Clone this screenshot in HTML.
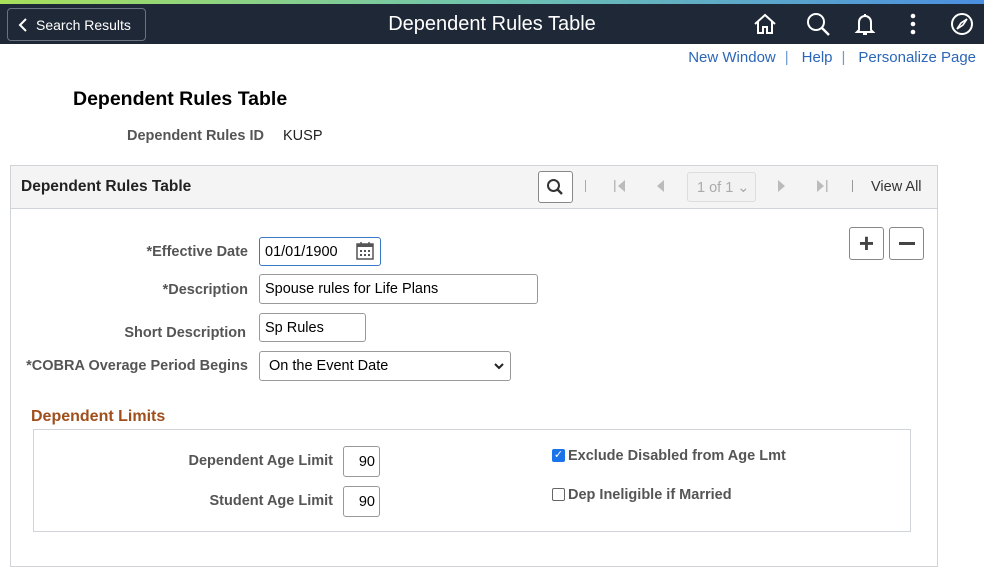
<!DOCTYPE html>
<html><head><style>
*{box-sizing:border-box;margin:0;padding:0}
body{width:984px;height:575px;position:relative;background:#fff;font-family:"Liberation Sans",Arial,sans-serif;overflow:hidden}
.a{position:absolute}
.lbl{position:absolute;font-weight:bold;font-size:14.5px;color:#555;text-align:right;white-space:nowrap}
.inp{position:absolute;border:1px solid #999;border-radius:3px;background:#fff;font-size:14.5px;color:#000;padding-left:5px;display:flex;align-items:center}
.lnk{color:#2c66b8;font-size:15px}
</style></head><body>
<div class="a" style="left:0;top:0;width:984px;height:4px;background:linear-gradient(90deg,#a8e05a,#6fc3b0 50%,#4a8fe0)"></div>
<div class="a" style="left:0;top:4px;width:984px;height:40px;background:#1f2836"></div>
<div class="a" style="left:7px;top:8px;width:139px;height:33px;border:1px solid #6b7280;border-radius:4px;color:#fff;font-size:14px;display:flex;align-items:center;padding-left:10px">
<svg width="10" height="16" viewBox="0 0 10 16"><path d="M8 2 L2 8 L8 14" stroke="#fff" stroke-width="2" fill="none"/></svg><span style="margin-left:8px">Search Results</span></div>
<div class="a" style="left:0;width:984px;top:13px;text-align:center;color:#fff;font-size:20px">Dependent Rules Table</div>
<svg class="a" style="left:752px;top:12px" width="26" height="24" viewBox="0 0 26 24"><path d="M3 12 L13 3 L23 12 M6 10 V21 H11 V15 H15 V21 H20 V10" stroke="#fff" stroke-width="2" fill="none"/></svg>
<svg class="a" style="left:805px;top:11px" width="26" height="26" viewBox="0 0 26 26"><circle cx="11" cy="11" r="8" stroke="#fff" stroke-width="2" fill="none"/><path d="M17 17 L24 24" stroke="#fff" stroke-width="2.4"/></svg>
<svg class="a" style="left:853px;top:11px" width="24" height="26" viewBox="0 0 24 26"><path d="M6 19 V11 A6 6 0 0 1 18 11 V19 L20 21 H4 Z M12 3 V5 M10 23 H14" stroke="#fff" stroke-width="2" fill="none"/></svg>
<svg class="a" style="left:908px;top:12px" width="10" height="24" viewBox="0 0 10 24"><circle cx="5" cy="4" r="2.3" fill="#fff"/><circle cx="5" cy="12" r="2.3" fill="#fff"/><circle cx="5" cy="20" r="2.3" fill="#fff"/></svg>
<svg class="a" style="left:950px;top:12px" width="24" height="24" viewBox="0 0 24 24"><circle cx="12" cy="12" r="10" stroke="#fff" stroke-width="2" fill="none"/><path d="M17 7 L11 11 L7 17 L13 13 Z" stroke="#fff" stroke-width="1.6" fill="none"/></svg>

<div class="a" style="top:49px;right:8px;font-size:15px;white-space:nowrap"><span class="lnk">New Window</span><span style="color:#6a9ad0;margin:0 13px 0 9px">|</span><span class="lnk">Help</span><span style="color:#6a9ad0;margin:0 13px 0 9px">|</span><span class="lnk">Personalize Page</span></div>
<div class="a" style="left:73px;top:88px;font-size:19.5px;font-weight:bold;color:#000">Dependent Rules Table</div>
<div class="lbl" style="left:127px;top:128px">Dependent Rules ID</div>
<div class="a" style="left:283px;top:128px;font-size:14.5px;color:#222">KUSP</div>

<div class="a" style="left:10px;top:165px;width:928px;height:402px;border:1px solid #d0d4d9"></div>
<div class="a" style="left:11px;top:166px;width:926px;height:43px;background:#f4f4f4;border-bottom:1px solid #d0d4d9"></div>
<div class="a" style="left:21px;top:178px;font-size:15.5px;font-weight:bold;color:#222">Dependent Rules Table</div>
<div class="a" style="left:538px;top:171px;width:35px;height:32px;border:1px solid #888;border-radius:3px;background:#fff"></div>
<svg class="a" style="left:546px;top:178px" width="18" height="18" viewBox="0 0 18 18"><circle cx="7.5" cy="7.5" r="5.5" stroke="#333" stroke-width="2" fill="none"/><path d="M11.5 11.5 L16 16" stroke="#333" stroke-width="2.4"/></svg>
<div class="a" style="left:585px;top:180px;width:1px;height:12px;background:#aaa"></div>
<svg class="a" style="left:612px;top:179px" width="16" height="14" viewBox="0 0 16 14"><rect x="2" y="1" width="1.5" height="12" fill="#bbb"/><path d="M13 1 L6 7 L13 13Z" fill="#bbb"/></svg>
<svg class="a" style="left:654px;top:179px" width="12" height="14" viewBox="0 0 12 14"><path d="M10 1 L3 7 L10 13Z" fill="#bbb"/></svg>
<div class="a" style="left:687px;top:172px;width:69px;height:30px;border:1px solid #ddd;border-radius:3px;background:#f2f2f2;color:#aaa;font-size:14.5px;padding:7px 0 0 9px">1 of 1 ⌄</div>
<svg class="a" style="left:776px;top:179px" width="12" height="14" viewBox="0 0 12 14"><path d="M2 1 L9 7 L2 13Z" fill="#bbb"/></svg>
<svg class="a" style="left:814px;top:179px" width="16" height="14" viewBox="0 0 16 14"><path d="M3 1 L10 7 L3 13Z" fill="#bbb"/><rect x="12" y="1" width="1.5" height="12" fill="#bbb"/></svg>
<div class="a" style="left:852px;top:180px;width:1px;height:12px;background:#999"></div>
<div class="a" style="left:871px;top:179px;font-size:14.5px;color:#333">View All</div>

<div class="a" style="left:849px;top:227px;width:35px;height:33px;border:1px solid #888;border-radius:3px;font-size:26px;font-weight:bold;color:#444;text-align:center;line-height:30px">+</div>
<div class="a" style="left:889px;top:227px;width:35px;height:33px;border:1px solid #888;border-radius:3px"><div class="a" style="left:9px;top:14px;width:16px;height:3px;background:#444"></div></div>

<div class="lbl" style="right:736px;top:244px">*Effective Date</div>
<div class="inp" style="left:259px;top:237px;width:122px;height:29px;border-color:#3a78c8">01/01/1900</div>
<svg class="a" style="left:355px;top:241px" width="20" height="20" viewBox="0 0 20 20"><rect x="2" y="3" width="16" height="15" stroke="#555" stroke-width="1.5" fill="none"/><rect x="2" y="3" width="16" height="3" fill="#555"/><path d="M6 1V4M14 1V4" stroke="#555" stroke-width="1.5"/><g fill="#555"><rect x="5" y="9" width="2" height="2"/><rect x="9" y="9" width="2" height="2"/><rect x="13" y="9" width="2" height="2"/><rect x="5" y="13" width="2" height="2"/><rect x="9" y="13" width="2" height="2"/><rect x="13" y="13" width="2" height="2"/></g></svg>
<div class="lbl" style="right:736px;top:282px">*Description</div>
<div class="inp" style="left:259px;top:274px;width:279px;height:30px">Spouse rules for Life Plans</div>
<div class="lbl" style="right:738px;top:325px">Short Description</div>
<div class="inp" style="left:259px;top:313px;width:107px;height:29px;align-items:flex-start;padding-top:6px">Sp Rules</div>
<div class="lbl" style="right:736px;top:358px">*COBRA Overage Period Begins</div>
<div class="inp" style="left:259px;top:351px;width:252px;height:30px;padding-left:9px">On the Event Date</div>
<svg class="a" style="left:494px;top:362px" width="10" height="8" viewBox="0 0 10 8"><path d="M1 2 L5 6 L9 2" stroke="#222" stroke-width="2" fill="none"/></svg>

<div class="a" style="left:31px;top:408px;font-size:16px;font-weight:bold;color:#a04f1c">Dependent Limits</div>
<div class="a" style="left:33px;top:429px;width:878px;height:103px;border:1px solid #d0d4d9"></div>
<div class="lbl" style="right:651px;top:453px">Dependent Age Limit</div>
<div class="inp" style="left:343px;top:446px;width:37px;height:31px;justify-content:flex-end;padding-right:4px">90</div>
<div class="lbl" style="right:651px;top:493px">Student Age Limit</div>
<div class="inp" style="left:343px;top:486px;width:37px;height:31px;justify-content:flex-end;padding-right:4px">90</div>
<div class="a" style="left:552px;top:449px;width:13px;height:13px;background:#1a73e8;border-radius:2px;color:#fff;font-size:11px;line-height:13px;text-align:center">✓</div>
<div class="lbl" style="left:568px;top:448px">Exclude Disabled from Age Lmt</div>
<div class="a" style="left:552px;top:488px;width:13px;height:13px;border:1px solid #666;border-radius:2px"></div>
<div class="lbl" style="left:568px;top:487px">Dep Ineligible if Married</div>
</body></html>
